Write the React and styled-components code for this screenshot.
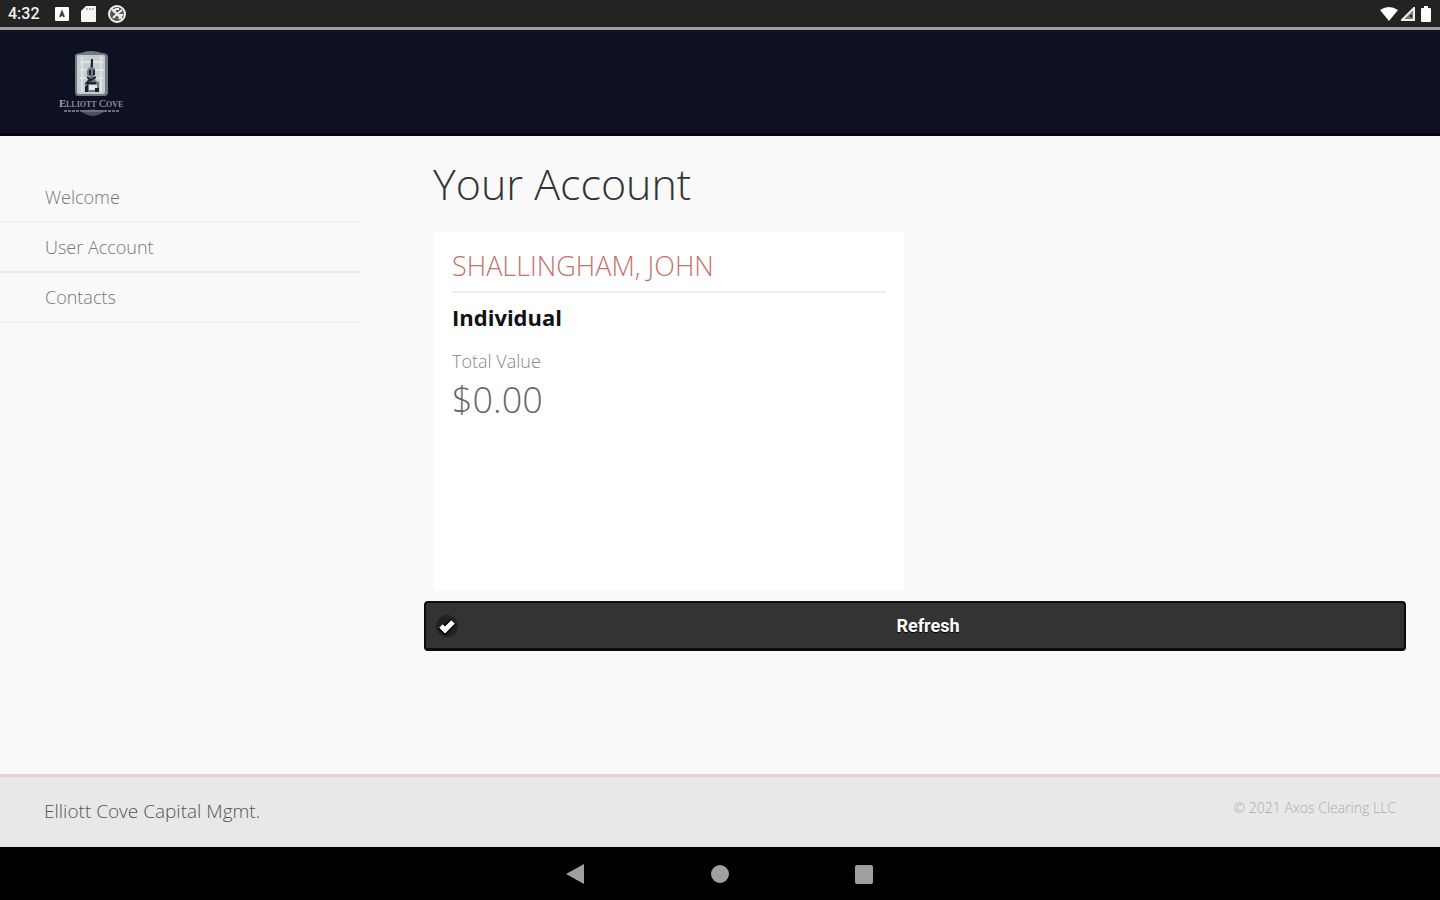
import React from 'react';
import styled, { createGlobalStyle } from 'styled-components';

const GlobalStyle = createGlobalStyle`
  * {
    box-sizing: border-box;
  }

  body {
    margin: 0;
    background: #f9f9f9;
    font-family: 'Open Sans', 'Noto Sans', sans-serif;
    font-weight: 300;
  }
`;

const Screen = styled.div`
  display: flex;
  flex-direction: column;
  min-height: 100vh;
`;

const StatusBar = styled.div`
  display: flex;
  justify-content: space-between;
  height: 30px;
  padding: 0 6px 0 8px;
  background: #232323;
  border-bottom: 3px solid #a0a0a0;
  color: #f2f2f2;
`;

const StatusGroup = styled.div`
  display: flex;
  align-items: center;
  gap: ${({ $gap }) => $gap}px;

  svg {
    display: block;
  }
`;

const Clock = styled.time`
  width: 35px;
  font-family: Roboto, sans-serif;
  font-size: 16px;
  font-weight: 500;
`;

const Header = styled.header`
  display: flex;
  align-items: center;
  height: 106px;
  padding: 2px 56px 0;
  background: #0e1121;
  border-bottom: 3px solid #04060c;
`;

const Body = styled.div`
  display: flex;
  flex: 1;
`;

const Sidebar = styled.nav`
  width: 25%;
  padding-top: 37px;
`;

const NavLink = styled.a`
  display: flex;
  align-items: center;
  height: 50px;
  padding-left: 45px;
  border-bottom: 2px solid ${({ $strong }) => ($strong ? '#e9e9e9' : '#f1f1f1')};
  color: #777;
  font-size: 18px;
  text-decoration: none;
`;

const Main = styled.main`
  flex: 1;
  padding: 16px 34px 0 64px;
`;

const Title = styled.h1`
  margin: 0 0 16px 9px;
  color: #333;
  font-size: 43px;
  font-weight: 300;
  line-height: 64px;
`;

const Card = styled.section`
  width: 48%;
  min-height: 358px;
  margin: 0 0 11px 9px;
  padding: 15px 18px 15px 19px;
  background: #fff;
  border-radius: 3px;
`;

const Owner = styled.h2`
  margin: 0 0 10px;
  padding-bottom: 6px;
  border-bottom: 2px solid #ededed;
  color: #c8716b;
  font-size: 27px;
  font-weight: 300;
  line-height: 38px;
`;

const AccountType = styled.h3`
  margin: 0 0 14px;
  color: #111;
  font-size: 22px;
  font-weight: 700;
  line-height: 28px;
`;

const Label = styled.div`
  color: #888;
  font-size: 18px;
  line-height: 32px;
`;

const Amount = styled.div`
  color: #666;
  font-size: 36px;
  line-height: 46px;
`;

const RefreshButton = styled.button`
  display: flex;
  align-items: center;
  width: 100%;
  height: 50px;
  padding: 0 10px;
  background: #333;
  border: 2px solid #0c0c0c;
  border-bottom-width: 3px;
  border-radius: 4px;
  color: #fff;
  font-family: Roboto, sans-serif;
  font-size: 18px;
  font-weight: 700;
  text-shadow: 0 1px 1px #000;

  span {
    flex: 1;
  }
`;

const Footer = styled.footer`
  display: flex;
  justify-content: space-between;
  height: 73px;
  padding: 20px 44px 0;
  background: #e8e8e8;
  border-top: 3px solid #e2d2d2;
  color: #555;
  font-size: 19px;
  line-height: 28px;
`;

const Copyright = styled.small`
  color: #aaa;
  font-size: 14px;
  line-height: 22px;
`;

const SystemNav = styled.div`
  display: flex;
  justify-content: center;
  align-items: center;
  gap: 120px;
  height: 53px;
  background: #000;
`;

const SystemButton = styled.button`
  width: 24px;
  height: 24px;
  padding: 0;
  background: none;
  border: 0;

  svg {
    display: block;
  }
`;

const links = [
  { text: 'Welcome' },
  { text: 'User Account', strong: true },
  { text: 'Contacts' },
];

const Logo = () => (
  <svg width="72" height="68" viewBox="0 0 72 68" role="img" aria-label="Elliott Cove">
    <path d="M19 6Q21 4 25 4Q35 0 46 4Q52 4 52 8V43Q52 47 48 47H22Q19 47 19 43Z" fill="#737b83" />
    <rect x="21" y="6" width="28" height="39" rx="2" fill="#c5ced0" />
    <path d="M24 13H47M23 21H48M24 29H47M26 8V43M45 8V43" stroke="#dde3e2" strokeWidth="2" />
    <path d="M35 11L34 18L31 21V26L34 28L29 34V43H43V33L40 32L38 28L39 25V20L37 18Z" fill="#6e7980" />
    <path d="M36 10V18M34 21V26M38 21V26M31 28L35 31L40 28M34 31L31 34H40" fill="none" stroke="#1b2634" strokeWidth="2" />
    <path d="M33 36H41V41H33Z" fill="#e4e9e8" />
    <path d="M29 43V38L32 35V43M39 43V39H43V43" fill="#18212f" />
    <text x="3" y="58" fill="#9ea2ac" fontFamily="Liberation Serif, serif" fontSize="11" fontWeight="700">E</text>
    <text x="10" y="58" fill="#898d98" fontFamily="Liberation Serif, serif" fontSize="8" fontWeight="700">LLIOTT</text>
    <text x="43" y="58" fill="#9ea2ac" fontFamily="Liberation Serif, serif" fontSize="11">C</text>
    <text x="50" y="58" fill="#898d98" fontFamily="Liberation Serif, serif" fontSize="8" fontWeight="700">OVE</text>
    <path d="M8 62H28M44 62H63" stroke="#6a6e7a" strokeWidth="2" strokeDasharray="3 1" />
    <path d="M24 62Q36 59 49 62Q43 67 35 67Q29 66 24 62Z" fill="#4d515e" />
    <path d="M26 62H48" stroke="#8d909b" />
  </svg>
);

const StatusIcons = () => (
  <>
    <svg width="14" height="14" viewBox="0 0 14 14" aria-hidden="true">
      <rect width="14" height="14" rx="1" fill="#fff" />
      <path d="M5 10L7 5L9 10M6 8H9" fill="none" stroke="#444" strokeWidth="2" />
    </svg>
    <svg width="15" height="16" viewBox="0 0 15 16" aria-hidden="true">
      <path d="M5 0H14Q15 0 15 1V15Q15 16 14 16H1Q0 16 0 15V5Z" fill="#f5f5f5" />
      <path d="M6 2V4M9 2V4M12 2V4" stroke="#777" />
    </svg>
    <svg width="18" height="18" viewBox="0 0 18 18" aria-hidden="true">
      <circle cx="9" cy="9" r="8" fill="#555" stroke="#eee" strokeWidth="2" />
      <path d="M4 4L14 14M14 5L9 9L5 13M5 7L8 4H11M11 10H14L11 14" fill="none" stroke="#eee" strokeWidth="2" />
    </svg>
  </>
);

const App = () => {
  return (
    <Screen>
      <GlobalStyle />
      <StatusBar>
        <StatusGroup $gap={12}>
          <Clock>4:32</Clock>
          <StatusIcons />
        </StatusGroup>
        <StatusGroup $gap={3}>
          <svg width="18" height="14" viewBox="0 0 18 14" aria-hidden="true">
            <path d="M0 3Q9-3 18 3L9 14Z" fill="#fff" />
          </svg>
          <svg width="14" height="14" viewBox="0 0 14 14" aria-hidden="true">
            <path d="M13 1V13H1Z" fill="#777" stroke="#eee" strokeWidth="2" />
            <path d="M9 8H11V10H9Z" fill="#232323" />
          </svg>
          <svg width="16" height="16" viewBox="0 0 16 16" aria-hidden="true">
            <path d="M6 0H10V2H12Q13 2 13 3V15Q13 16 12 16H4Q3 16 3 15V3Q3 2 4 2H6Z" fill="#fff" />
          </svg>
        </StatusGroup>
      </StatusBar>
      <Header>
        <Logo />
      </Header>
      <Body>
        <Sidebar>
          {links.map((link) => (
            <NavLink key={link.text} href="#" $strong={link.strong}>
              {link.text}
            </NavLink>
          ))}
        </Sidebar>
        <Main>
          <Title>Your Account</Title>
          <Card>
            <Owner>SHALLINGHAM, JOHN</Owner>
            <AccountType>Individual</AccountType>
            <Label>Total Value</Label>
            <Amount>$0.00</Amount>
          </Card>
          <RefreshButton type="button">
            <svg width="26" height="26" viewBox="0 0 26 26" aria-hidden="true">
              <circle cx="11" cy="13" r="11" fill="#222" />
              <path d="M5 13L9 17L17 9" fill="none" stroke="#000" strokeWidth="8" />
              <path d="M5 13L9 17L17 9" fill="none" stroke="#fff" strokeWidth="5" />
            </svg>
            <span>Refresh</span>
          </RefreshButton>
        </Main>
      </Body>
      <Footer>
        <span>Elliott Cove Capital Mgmt.</span>
        <Copyright>© 2021 Axos Clearing LLC</Copyright>
      </Footer>
      <SystemNav>
        <SystemButton type="button" aria-label="Back">
          <svg width="24" height="24" viewBox="0 0 24 24">
            <path d="M2 12L20 2V22Z" fill="#a0a0a0" />
          </svg>
        </SystemButton>
        <SystemButton type="button" aria-label="Home">
          <svg width="24" height="24" viewBox="0 0 24 24">
            <circle cx="12" cy="12" r="9" fill="#a0a0a0" />
          </svg>
        </SystemButton>
        <SystemButton type="button" aria-label="Recents">
          <svg width="24" height="24" viewBox="0 0 24 24">
            <rect x="3" y="3" width="18" height="19" rx="2" fill="#a0a0a0" />
          </svg>
        </SystemButton>
      </SystemNav>
    </Screen>
  );
};

export default App;
